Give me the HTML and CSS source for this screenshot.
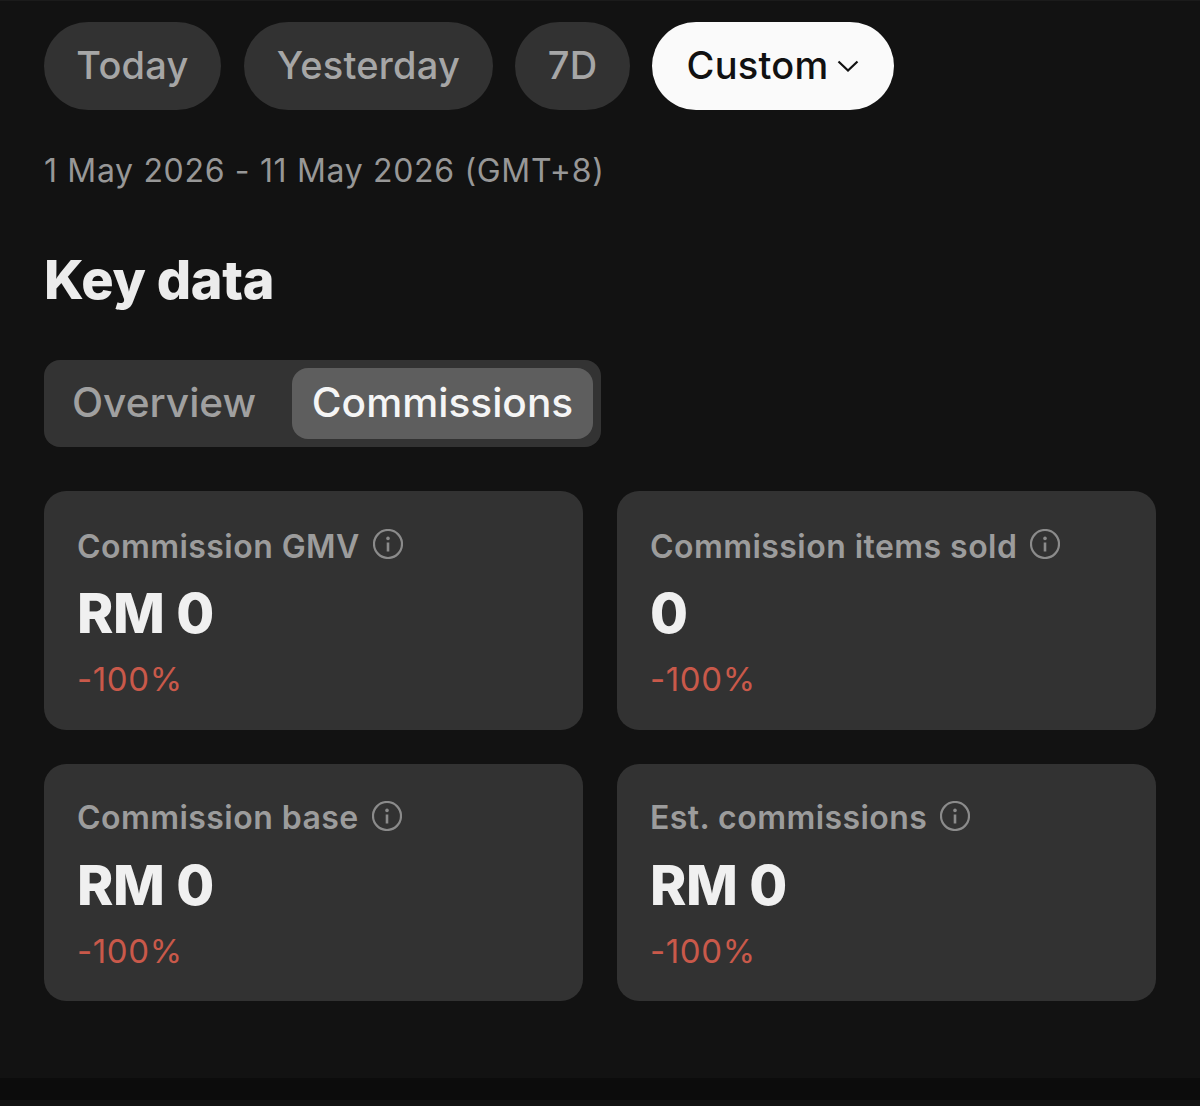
FILE: index.html
```html
<!DOCTYPE html>
<html lang="en">
<head>
<meta charset="utf-8">
<title>Key data</title>
<link rel="stylesheet" href="styles.css">
</head>
<body>
<main class="page">
  <div class="pills">
    <button class="pill pill-today">Today</button>
    <button class="pill pill-yesterday">Yesterday</button>
    <button class="pill pill-7d">7D</button>
    <button class="pill pill-custom">Custom
      <svg class="chev" viewBox="0 0 22 12" width="22" height="12"><path d="M1.5 1.5 11 10.5 20.5 1.5" fill="none" stroke="#111" stroke-width="2.2"/></svg>
    </button>
  </div>
  <p class="range">1 May 2026 - 11 May 2026 (GMT+8)</p>
  <h2 class="title">Key data</h2>
  <div class="tabs">
    <div class="tab">Overview</div>
    <div class="tab tab-active">Commissions</div>
  </div>
  <section class="grid">
    <article class="card">
      <div class="label">Commission GMV <svg class="info" viewBox="0 0 30 30" width="30" height="30"><circle cx="15" cy="15" r="14" fill="none" stroke="#8b8b8b" stroke-width="2.2"/><circle cx="15" cy="9.4" r="1.8" fill="#8b8b8b"/><path d="M15 13.5V22.5" stroke="#8b8b8b" stroke-width="2.6"/></svg></div>
      <div class="value">RM 0</div>
      <div class="delta">-100%</div>
    </article>
    <article class="card">
      <div class="label">Commission items sold <svg class="info" viewBox="0 0 30 30" width="30" height="30"><circle cx="15" cy="15" r="14" fill="none" stroke="#8b8b8b" stroke-width="2.2"/><circle cx="15" cy="9.4" r="1.8" fill="#8b8b8b"/><path d="M15 13.5V22.5" stroke="#8b8b8b" stroke-width="2.6"/></svg></div>
      <div class="value">0</div>
      <div class="delta">-100%</div>
    </article>
    <article class="card">
      <div class="label">Commission base <svg class="info" viewBox="0 0 30 30" width="30" height="30"><circle cx="15" cy="15" r="14" fill="none" stroke="#8b8b8b" stroke-width="2.2"/><circle cx="15" cy="9.4" r="1.8" fill="#8b8b8b"/><path d="M15 13.5V22.5" stroke="#8b8b8b" stroke-width="2.6"/></svg></div>
      <div class="value">RM 0</div>
      <div class="delta">-100%</div>
    </article>
    <article class="card">
      <div class="label">Est. commissions <svg class="info" viewBox="0 0 30 30" width="30" height="30"><circle cx="15" cy="15" r="14" fill="none" stroke="#8b8b8b" stroke-width="2.2"/><circle cx="15" cy="9.4" r="1.8" fill="#8b8b8b"/><path d="M15 13.5V22.5" stroke="#8b8b8b" stroke-width="2.6"/></svg></div>
      <div class="value">RM 0</div>
      <div class="delta">-100%</div>
    </article>
  </section>
</main>
<div class="band"></div>
</body>
</html>
```
FILE: styles.css
```css
* { box-sizing: border-box; }
html, body { margin: 0; padding: 0; height: 100%; }
body {
  background: #121212;
  font-family: Inter, "Liberation Sans", sans-serif;
  color: #eee;
  overflow: hidden;
}
.page { height: 1078px; padding: 21px 44px 0; border-top: 1px solid #1b1b1b; }
.pills { display: flex; gap: 22px; height: 88px; }
.pill {
  height: 88px;
  border: 0;
  border-radius: 44px;
  background: #323232;
  color: #a6a6a6;
  font-family: inherit;
  font-size: 38px;
  letter-spacing: 0.25px;
  font-weight: 500;
  padding: 0 0 2px;
  display: flex;
  align-items: center;
  justify-content: center;
}
.pill-today { width: 177px; margin-right: 1px; }
.pill-yesterday { width: 249px; }
.pill-7d { width: 115px; }
.pill-custom { width: 242px; background: #fafafa; color: #111; gap: 9px; }
.chev { flex: none; margin-top: 2px; }
.range {
  margin: 39px 0 0;
  font-size: 32px;
  letter-spacing: 0.67px;
  line-height: 44px;
  color: #979797;
}
.title {
  margin: 57px 0 0;
  font-size: 54px;
  line-height: 60px;
  font-weight: 800;
  letter-spacing: -0.4px;
  color: #ececec;
}
.tabs {
  display: flex;
  margin-top: 50px;
  height: 87px;
  padding: 8px;
  background: #333;
  border-radius: 16px;
  align-items: stretch;
  width: 557px;
}
.tab {
  width: 240px;
  padding: 0 0 2px 20px;
  display: flex;
  align-items: center;
  font-size: 40.6px;
  font-weight: 500;
  color: #a0a0a0;
}
.tab-active {
  width: 301px;
  justify-content: center;
  padding: 0 0 2px;
  background: #5e5e5e;
  border-radius: 16px;
  color: #f5f5f5;
}
.grid {
  display: grid;
  grid-template-columns: 539px 539px;
  grid-template-rows: 239px 237px;
  gap: 34px;
  margin-top: 44px;
}
.card {
  display: flex;
  flex-direction: column;
  justify-content: center;
  background: #323232;
  border-radius: 22px;
  padding: 4px 33px 0;
}
.card:nth-child(n+3) { padding-top: 3px; }
.label {
  display: flex;
  align-items: center;
  gap: 13px;
  height: 40px;
  font-size: 32px;
  letter-spacing: 0.45px;
  font-weight: 600;
  color: #9c9c9c;
}
.info { flex: none; margin-top: -4px; }
.value {
  margin-top: 14px;
  font-size: 55px;
  line-height: 66px;
  font-weight: 800;
  letter-spacing: -0.4px;
  color: #f0f0f0;
}
.delta {
  margin-top: 13px;
  font-size: 33px;
  letter-spacing: 0.6px;
  line-height: 40px;
  color: #c9594a;
}
.band { height: 22px; background: #0c0c0c; }
```
